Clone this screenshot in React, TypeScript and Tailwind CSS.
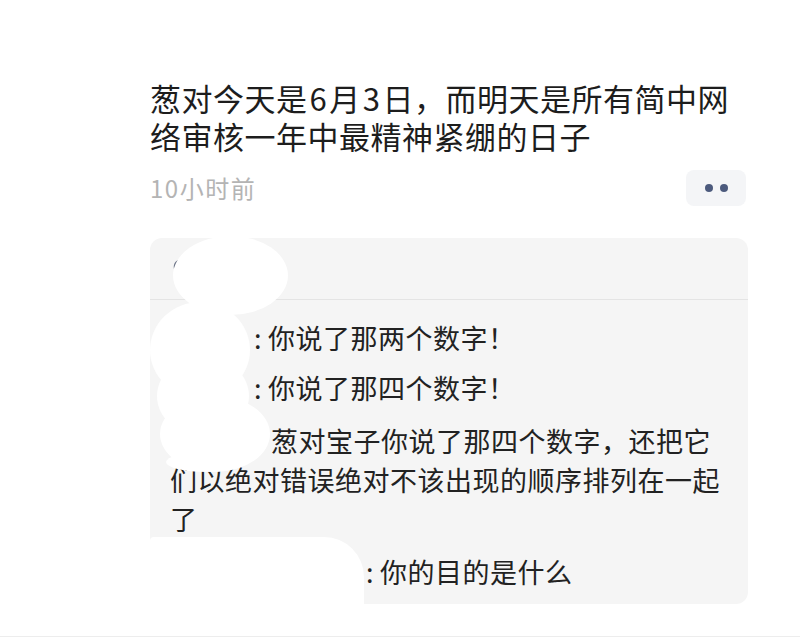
import React from 'react';

const font = { fontFamily: '"Noto Sans CJK SC", "Noto Sans", sans-serif' };

function Blot({ className }: { className: string }) {
  return <div className={`absolute bg-white ${className}`} />;
}

export default function App() {
  return (
    <div className="w-[800px] h-[644px] bg-white overflow-hidden" style={font}>
      <div className="h-[637px] border-b border-[#ededed] pl-[150px] pr-[52px] pt-[79px]">
        {/* post text */}
        <div className="text-[31px] leading-[38px] tracking-[0.5px] text-[#1d1d1d]">
          <div className="whitespace-nowrap">
            葱对今天是<span className="px-[2px]">6</span>月<span className="px-[2px]">3</span>日，而明天是所有简中网
          </div>
          <div className="whitespace-nowrap">络审核一年中最精神紧绷的日子</div>
        </div>

        {/* meta row */}
        <div className="mt-[15px] h-[36px] flex items-center justify-between">
          <span className="text-[24px] tracking-[1.5px] text-[#b4b4b4]">10小时前</span>
          <button className="mr-[2px] w-[60px] h-[36px] rounded-lg bg-[#f4f5f7] flex items-center justify-center gap-[7px]">
            <span className="w-[8px] h-[8px] rounded-full bg-[#4c5a7d]" />
            <span className="w-[8px] h-[8px] rounded-full bg-[#4c5a7d]" />
          </button>
        </div>

        {/* quoted card */}
        <div className="relative mt-[32px] h-[366px] rounded-[12px] bg-[#f5f5f5] text-[27px] tracking-[0.5px] text-[#222222]">
          <div className="h-[62px] border-b border-[#e4e4e4] px-[20px] pt-[21px]">
            <svg width="12" height="16" viewBox="0 0 12 16">
              <path d="M8 2 A7 7 0 0 0 8 14" fill="none" stroke="#6b7386" strokeWidth="1.8" strokeLinecap="round" />
            </svg>
          </div>

          <div className="px-[20px] pt-[19px] pb-[13px]">
            <div className="leading-[38px] whitespace-nowrap">
              <span className="inline-block w-[84px]" />:<span className="ml-[6px]">你说了那两个数字！</span>
            </div>
            <div className="mt-[12px] leading-[38px] whitespace-nowrap">
              <span className="inline-block w-[84px]" />:<span className="ml-[6px]">你说了那四个数字！</span>
            </div>
            <div className="mt-[14px] leading-[39px]">
              <div className="whitespace-nowrap">
                <span className="inline-block w-[101px]" />葱对宝子你说了那四个数字，还把它
              </div>
              <div className="whitespace-nowrap">们以绝对错误绝对不该出现的顺序排列在一起</div>
              <div>了</div>
            </div>
            <div className="mt-[15px] leading-[38px] whitespace-nowrap">
              <span className="inline-block w-[196px]" />:<span className="ml-[6px]">你的目的是什么</span>
            </div>
          </div>

          {/* white redaction marks */}
          <Blot className="left-[23px] top-[-2px] w-[115px] h-[79px] rounded-[50%]" />
          <Blot className="left-[0px] top-[64px] w-[100px] h-[96px] rounded-[50%]" />
          <Blot className="left-[7px] top-[118px] w-[92px] h-[80px] rounded-[50%]" />
          <Blot className="left-[10px] top-[158px] w-[110px] h-[76px] rounded-[50%]" />
          <Blot className="left-[16px] top-[214px] w-[80px] h-[20px] rounded-[50%]" />
          <Blot className="left-[0px] top-[299px] w-[214px] h-[67px] rounded-tr-[40px] rounded-tl-[4px]" />
        </div>
      </div>
    </div>
  );
}
